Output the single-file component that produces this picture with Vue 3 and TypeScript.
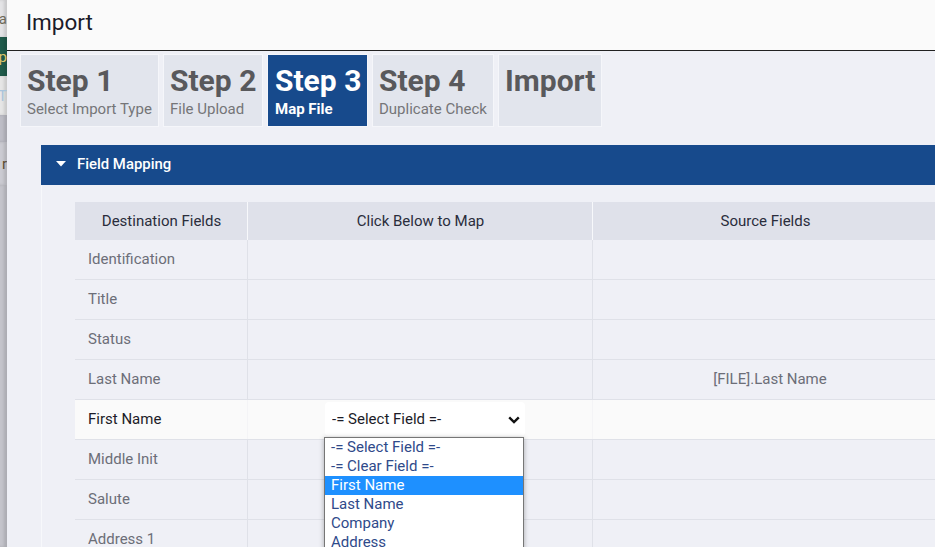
<template>
  <div class="screen">
    <!-- page behind the dialog -->
    <div class="behind">
      <div class="behind__a"><span>a</span></div>
      <div class="behind__b"><span>p</span></div>
      <div class="behind__c"><span>T</span></div>
      <div class="behind__d"></div>
      <div class="behind__e"><span>r</span></div>
      <div class="behind__f"></div>
    </div>

    <div class="dialog">
      <header class="dialog__title">Import</header>

      <div class="steps">
        <div v-for="s in steps" :key="s.name" class="step" :class="{ active: s.active }" :style="{ width: s.width + 'px' }">
          <div class="step__name">{{ s.name }}</div>
          <div class="step__sub">{{ s.sub }}</div>
        </div>
      </div>

      <section class="panel">
        <div class="panel__head">
          <svg class="caret" width="10" height="6" viewBox="0 0 10 6"><path d="M0 0h10L5 5.5z" fill="#fff" /></svg>
          <span>Field Mapping</span>
        </div>
        <div class="panel__body">
          <table class="map">
            <thead>
              <tr>
                <th class="c1">Destination Fields</th>
                <th class="c2">Click Below to Map</th>
                <th class="c3">Source Fields</th>
              </tr>
            </thead>
            <tbody>
              <tr v-for="r in rows" :key="r.name" :class="{ current: r.current }">
                <td>{{ r.name }}</td>
                <td class="center">
                  <div v-if="r.current" class="picker">
                    <select class="picker__select">
                      <option>-= Select Field =-</option>
                    </select>
                    <svg class="picker__arrow" width="12" height="8" viewBox="0 0 12 8">
                      <path d="M1.2 1.3 6 6l4.8-4.7" fill="none" stroke="#111" stroke-width="2.4" />
                    </svg>
                    <ul class="picker__list">
                      <li v-for="o in options" :key="o" :class="{ hi: o === 'First Name' }">{{ o }}</li>
                    </ul>
                  </div>
                </td>
                <td class="center source">{{ r.source }}</td>
              </tr>
            </tbody>
          </table>
        </div>
      </section>
    </div>
  </div>
</template>

<script setup lang="ts">
const steps = [
  { name: 'Step 1', sub: 'Select Import Type', width: 139, active: false },
  { name: 'Step 2', sub: 'File Upload', width: 100, active: false },
  { name: 'Step 3', sub: 'Map File', width: 101, active: true },
  { name: 'Step 4', sub: 'Duplicate Check', width: 122, active: false },
  { name: 'Import', sub: '', width: 104, active: false }
]

const rows = [
  { name: 'Identification', source: '' },
  { name: 'Title', source: '' },
  { name: 'Status', source: '' },
  { name: 'Last Name', source: '[FILE].Last Name' },
  { name: 'First Name', source: '', current: true },
  { name: 'Middle Init', source: '' },
  { name: 'Salute', source: '' },
  { name: 'Address 1', source: '' }
]

const options = ['-= Select Field =-', '-= Clear Field =-', 'First Name', 'Last Name', 'Company', 'Address', 'City']
</script>

<style>
html,
body {
  margin: 0;
  overflow: hidden;
}
</style>

<style scoped>
.screen {
  display: flex;
  width: 935px;
  height: 547px;
  overflow: hidden;
  font-family: Roboto, "Liberation Sans", sans-serif;
}

.behind {
  flex: 0 0 7px;
  width: 7px;
  min-width: 0;
  overflow: hidden;
  display: flex;
  flex-direction: column;
  font-size: 15px;
  background: #c4c4cb;
}
.behind > div {
  display: flex;
  justify-content: flex-end;
  align-items: center;
  overflow: hidden;
  box-shadow: inset -3px 0 3px rgba(0, 0, 0, 0.12);
}
.behind__a { height: 37px; background: #e4e4e6; color: #6d6a58; }
.behind__b { height: 39px; background: #205c4c; color: #d9c46a; }
.behind__c { height: 39px; background: #e6e6e6; color: #a9c4dc; }
.behind__d { height: 27px; background: #bdbdc6; }
.behind__e { height: 43px; background: #cbcbd2; color: #5b4c32; }
.behind__f { flex: 1; background: #c4c4cb; }

.dialog {
  flex: 1;
  min-width: 0;
  background: #eff0f6;
}
.dialog__title {
  height: 51px;
  box-sizing: border-box;
  padding: 9px 0 0 19px;
  background: #fafafa;
  border-bottom: 1px solid #222;
  font-size: 22.5px;
  line-height: 27px;
  color: #1b1b2a;
}

.steps {
  display: flex;
  gap: 4px;
  height: 73px;
  margin: 3px 0 0 13px;
}
.step {
  box-sizing: border-box;
  padding: 8px 0 0 6px;
  background: #e2e5ed;
  border: 1px solid #f5f6fa;
  color: #59595c;
}
.step__name {
  font-size: 30px;
  font-weight: 700;
  line-height: 36px;
}
.step__sub {
  margin-top: 1px;
  font-size: 15px;
  line-height: 18px;
  color: #757578;
}
.step.active {
  padding-left: 7px;
  background: #174a8c;
  color: #fff;
}
.step.active .step__sub {
  color: #fff;
  font-weight: 700;
}

.panel {
  margin: 18px 0 0 34px;
  width: 900px;
}
.panel__head {
  box-sizing: border-box;
  display: flex;
  align-items: center;
  gap: 11px;
  height: 40px;
  padding: 0 0 2px 15px;
  background: #174a8c;
  color: #fff;
  font-size: 14.9px;
  font-weight: 500;
}
.panel__body {
  padding: 17px 0 0 33px;
  border-left: 1px solid #f7f8fb;
}

.map {
  width: 862px;
  table-layout: fixed;
  border-collapse: collapse;
  font-size: 15px;
}
.map th {
  height: 38px;
  padding: 0 0 0 1px;
  background: #dfe1ea;
  color: #2a2d3c;
  font-weight: 400;
  border-left: 1px solid #f7f8fb;
}
.map th.c1 {
  width: 171px;
  border-left: 0;
}
.map th.c2 {
  width: 343px;
}
.map td {
  box-sizing: border-box;
  height: 40px;
  padding: 0 0 0 13px;
  color: #6c6e78;
  border-bottom: 1px solid #dfe1e8;
  border-left: 1px solid #dfe1e8;
}
.map tbody tr:first-child td {
  height: 39px;
}
.map td:first-child {
  border-left: 0;
}
.map td.center {
  padding: 0;
  text-align: center;
}
.map td.source {
  padding-left: 10px;
}
.map tr.current td {
  background: #fafafa;
  color: #1c1c28;
  border-left-color: #f4f4f6;
}

.picker {
  position: relative;
  width: 200px;
  margin-left: 77px;
}
.picker__select {
  display: block;
  width: 200px;
  height: 34px;
  padding: 0 0 0 7px;
  appearance: none;
  background: #fff;
  border: 0;
  border-radius: 4px;
  font-family: inherit;
  font-size: 15px;
  color: #1c1c28;
}
.picker__arrow {
  position: absolute;
  top: 14px;
  left: 183px;
  pointer-events: none;
}
.picker__list {
  position: absolute;
  top: 35px;
  left: -1px;
  z-index: 2;
  width: 198px;
  margin: 0;
  padding: 0;
  list-style: none;
  text-align: left;
  background: #fff;
  border: 1px solid #767676;
  box-shadow: 0 1px 5px rgba(0, 0, 0, 0.3);
  font-size: 15px;
  line-height: 19px;
  color: #2f4a8a;
}
.picker__list li {
  height: 19px;
  padding-left: 6px;
}
.picker__list li.hi {
  background: #1e90ff;
  color: #fff;
}
</style>
